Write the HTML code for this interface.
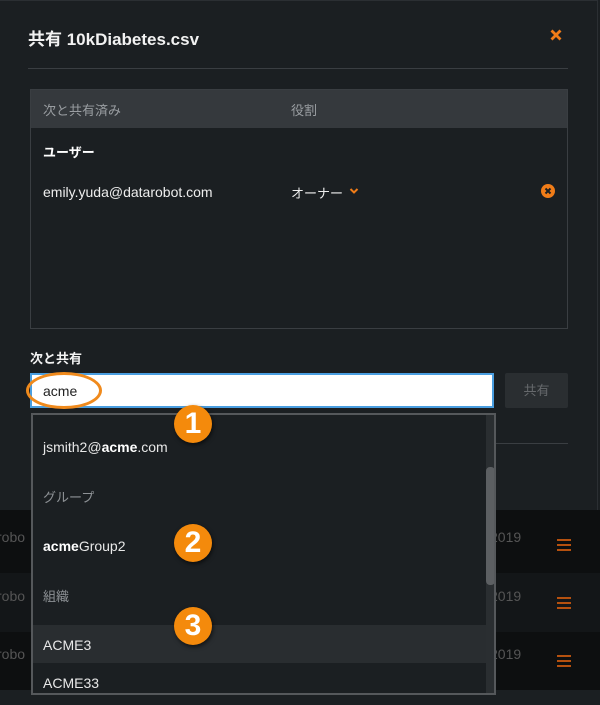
<!DOCTYPE html>
<html><head><meta charset="utf-8"><style>
*{margin:0;padding:0;box-sizing:border-box}
body{width:600px;height:705px;background:#1b1f22;font-family:"Liberation Sans","Noto Sans CJK JP",sans-serif;position:relative;overflow:hidden;color:#e8e8e8}
.a{position:absolute}
.row{position:absolute;left:0;width:600px}
.badge{position:absolute;width:38px;height:38px;border-radius:50%;background:#f48a0c;color:#fff;font:bold 30px "Liberation Sans",sans-serif;text-align:center;line-height:38px;box-shadow:1px 2px 4px rgba(0,0,0,.6)}
.hb{position:absolute;left:557px;width:14px;height:2px;background:#b5510f;box-shadow:0 5px 0 #b5510f,0 10px 0 #b5510f}
</style></head><body>
<div class="a" style="left:0;top:0;width:598px;height:510px;border-top:1px solid #2b2f33;border-right:1px solid #2b2f33"></div>
<div class="a" style="left:28px;top:25px;font-size:17px;color:#f2f2f2;font-weight:bold">共有 10kDiabetes.csv</div>
<svg class="a" style="left:550px;top:29px" width="12" height="12" viewBox="0 0 12 12"><path d="M1.5 1.5L10.5 10.5M10.5 1.5L1.5 10.5" stroke="#f07c18" stroke-width="2.8"/></svg>
<div class="a" style="left:28px;top:68px;width:540px;height:1px;background:#3a3e42"></div>
<div class="a" style="left:30px;top:89px;width:538px;height:240px;border:1px solid #3a3e42"></div>
<div class="a" style="left:31px;top:90px;width:536px;height:38px;background:#35393d"></div>
<div class="a" style="left:43px;top:100px;font-size:13px;color:#9a9ea2">次と共有済み</div>
<div class="a" style="left:291px;top:100px;font-size:13px;color:#9a9ea2">役割</div>
<div class="a" style="left:43px;top:142px;font-size:13px;font-weight:bold;color:#fff">ユーザー</div>
<div class="a" style="left:43px;top:184px;font-size:14px;color:#eee">emily.yuda@datarobot.com</div>
<div class="a" style="left:291px;top:183px;font-size:13px;color:#eee">オーナー</div>
<svg class="a" style="left:349px;top:187px" width="10" height="8" viewBox="0 0 10 8"><path d="M1.5 2L5 5.5L8.5 2" stroke="#f07c18" stroke-width="2" fill="none"/></svg>
<svg class="a" style="left:541px;top:184px" width="14" height="14" viewBox="0 0 14 14"><circle cx="7" cy="7" r="7" fill="#f07c18"/><path d="M4.5 4.5L9.5 9.5M9.5 4.5L4.5 9.5" stroke="#1b1f22" stroke-width="2"/></svg>
<div class="a" style="left:30px;top:348px;font-size:13px;font-weight:bold;color:#f2f2f2">次と共有</div>
<div class="a" style="left:30px;top:373px;width:464px;height:35px;background:#fff;border:2px solid #4a9ee0"></div>
<div class="a" style="left:43px;top:383px;font-size:14px;color:#222">acme</div>
<div class="a" style="left:505px;top:373px;width:63px;height:35px;background:#2a2e31;border-radius:2px;color:#66696c;font-size:13px;text-align:center;line-height:35px">共有</div>
<div class="a" style="left:496px;top:443px;width:72px;height:1px;background:#3a3e42"></div>
<div class="row" style="top:510px;height:63px;background:#0d0f10"></div>
<div class="row" style="top:573px;height:59px;background:#131618"></div>
<div class="row" style="top:632px;height:58px;background:#0d0f10"></div>
<div class="row" style="top:690px;height:15px;background:#1b1f22"></div>
<div class="a" style="left:-3px;top:529px;font-size:14px;color:#555">robo</div>
<div class="a" style="left:-3px;top:588px;font-size:14px;color:#555">robo</div>
<div class="a" style="left:-3px;top:646px;font-size:14px;color:#555">robo</div>
<div class="a" style="left:490px;top:529px;font-size:14px;color:#555">2019</div>
<div class="a" style="left:490px;top:588px;font-size:14px;color:#555">2019</div>
<div class="a" style="left:490px;top:646px;font-size:14px;color:#555">2019</div>
<div class="hb" style="top:539px"></div><div class="hb" style="top:597px"></div><div class="hb" style="top:655px"></div>
<div class="a" style="left:31px;top:413px;width:465px;height:282px;background:#1b1f22;border:2px solid #55585b;overflow:hidden">
<div class="a" style="left:0;top:210px;width:453px;height:38px;background:#292d30"></div>
<div class="a" style="left:453px;top:0;width:10px;height:280px;background:#2a2e31"></div>
<div class="a" style="left:453px;top:52px;width:9px;height:118px;background:#5c5f62;border-radius:4px"></div>
<div class="a" style="left:10px;top:24px;font-size:14px;color:#e8e8e8">jsmith2@<b style="color:#fff">acme</b>.com</div>
<div class="a" style="left:10px;top:72px;font-size:13px;color:#8e9296">グループ</div>
<div class="a" style="left:10px;top:123px;font-size:14px;color:#e8e8e8"><b style="color:#fff">acme</b>Group2</div>
<div class="a" style="left:10px;top:171px;font-size:13px;color:#8e9296">組織</div>
<div class="a" style="left:10px;top:222px;font-size:14px;color:#e8e8e8">ACME3</div>
<div class="a" style="left:10px;top:260px;font-size:14px;color:#e8e8e8">ACME33</div>
</div>
<div class="a" style="left:26px;top:372px;width:76px;height:37px;border:3px solid #f08a1c;border-radius:50%"></div>
<div class="badge" style="left:174px;top:405px">1</div>
<div class="badge" style="left:174px;top:524px">2</div>
<div class="badge" style="left:174px;top:607px">3</div>
</body></html>
